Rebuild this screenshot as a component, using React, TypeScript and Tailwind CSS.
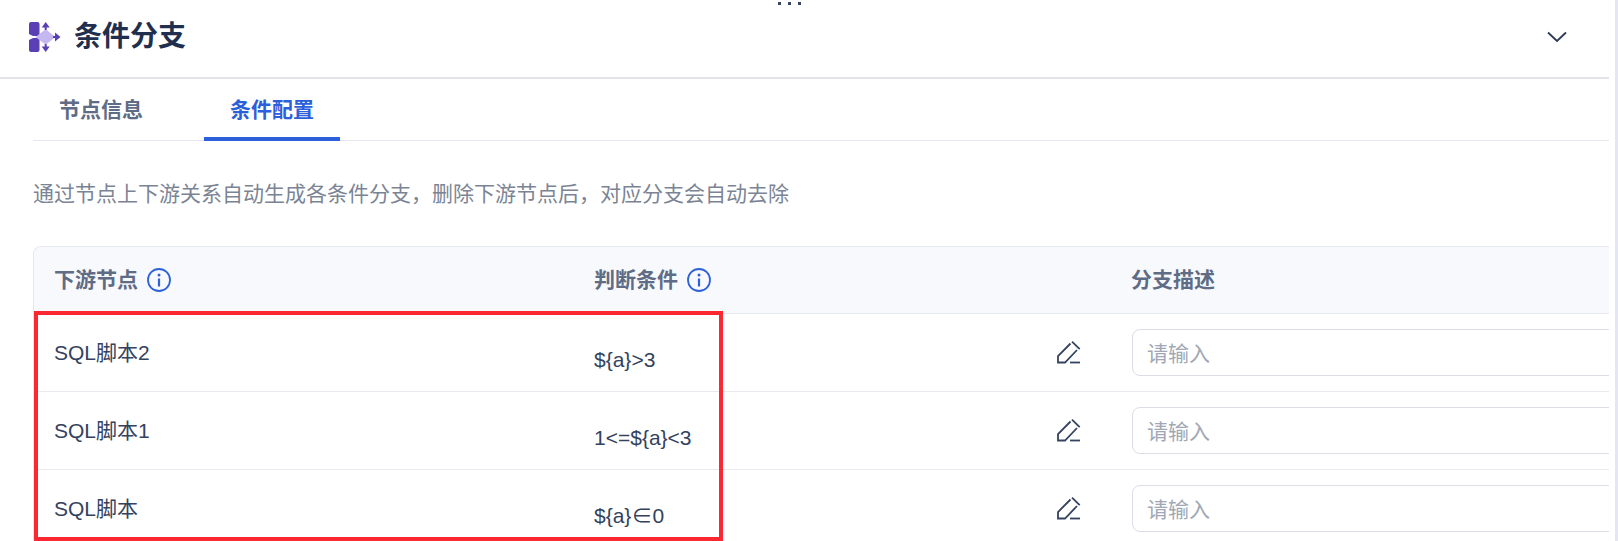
import React from 'react';

const rows = [
  { name: 'SQL脚本2', cond: '${a}>3' },
  { name: 'SQL脚本1', cond: '1<=${a}<3' },
  { name: 'SQL脚本', cond: '${a}∈0' },
];

function BranchLogo() {
  return (
    <svg width="33" height="32" viewBox="0 0 33 32" className="shrink-0">
      <rect x="1" y="1" width="10.500" height="30" rx="2" fill="#5a3fb5" />
      <path d="M0 12.500l5 2.500h4v2H5l-5 2.500z" fill="#fff" />
      <path d="M7.500 16L17.700 8.200 27.500 16l-9.800 7.800z" fill="#c5b8f0" />
      <path d="M17.700 5v4M17.700 23v4M25 16h3" stroke="#5a3fb5" strokeWidth="2" fill="none" />
      <path d="M13.700 6.500L17.700 1l4 5.500zM13.700 25.500l4 5.500 4-5.500zM27 11.500l5.500 4.500-5.500 4.500z" fill="#5a3fb5" />
    </svg>
  );
}

function InfoIcon() {
  return (
    <svg width="24" height="24" viewBox="0 0 24 24" fill="none" stroke="#2f62d9" className="shrink-0">
      <circle cx="12" cy="12" r="11" strokeWidth="1.800" />
      <circle cx="12" cy="7" r="1.500" fill="#2f62d9" stroke="none" />
      <path d="M12 10.500V18.500" strokeWidth="2.200" />
    </svg>
  );
}

function EditIcon() {
  return (
    <svg width="24" height="23" viewBox="0 0 24 23" fill="none" stroke="#34435f" strokeWidth="1.800" className="shrink-0">
      <path d="M20 9L8 21.500H1V15L13.500 2.500" />
      <path d="M15 0.700l7.700 7.500" />
      <path d="M13 21.500h10" />
    </svg>
  );
}

export default function App() {
  return (
    <div className="flex h-[541px] w-[1618px] overflow-hidden bg-white font-['Liberation_Sans','Noto_Sans_CJK_SC',sans-serif] text-[21px] text-[#33425e]">
      <div className="relative w-[1609px] shrink-0">
        {/* drag handle */}
        <div className="absolute left-[778px] top-[2px] flex gap-[7px]">
          <span className="h-[3px] w-[3px] bg-[#3a4660]" />
          <span className="h-[3px] w-[3px] bg-[#3a4660]" />
          <span className="h-[3px] w-[3px] bg-[#3a4660]" />
        </div>

        {/* Title */}
        <div className="flex h-[79px] items-center border-b-2 border-[#e2e3e8] pb-[3px] pl-[28px] pr-[42px]">
          <BranchLogo />
          <h1 className="ml-[13px] text-[28px] font-bold text-[#1f2f4d]">条件分支</h1>
          <svg width="20" height="12" viewBox="0 0 20 12" fill="none" stroke="#2b3a55" strokeWidth="1.800" className="ml-auto shrink-0">
            <path d="M1 1.500l9 8.500 9-8.500" />
          </svg>
        </div>

        <div className="pl-[33px]">
          {/* Tabs */}
          <div className="flex h-[62px] items-end gap-[35px] border-b border-[#e6e7ee]">
            <div className="-mb-px flex h-[62px] items-center border-b-[4px] border-transparent px-[26px] pt-[4px] font-bold text-[#5f6c85]">节点信息</div>
            <div className="-mb-px flex h-[62px] items-center border-b-[4px] border-[#2b60da] px-[26px] pt-[4px] font-bold text-[#2b60da]">条件配置</div>
          </div>

          <p className="mt-[39px] text-[#7b8494] leading-[28px]">通过节点上下游关系自动生成各条件分支，删除下游节点后，对应分支会自动去除</p>

          {/* Table */}
          <div className="mt-[38px] overflow-hidden rounded-tl-[8px] border-l border-t border-[#e6e8f0]">
            <div className="flex h-[67px] items-center border-b border-[#e6e8f0] bg-[#f8f9fd] font-bold text-[#5f6c85]">
              <div className="flex w-[560px] shrink-0 items-center gap-[9px] pl-[20px]">
                下游节点
                <InfoIcon />
              </div>
              <div className="flex w-[537px] shrink-0 items-center gap-[9px]">
                判断条件
                <InfoIcon />
              </div>
              <div>分支描述</div>
            </div>
            {rows.map((row) => (
              <div key={row.name} className="flex h-[78px] items-center border-b border-[#e9eaef]">
                <div className="w-[560px] shrink-0 pl-[20px]">{row.name}</div>
                <div className="mt-[14px] w-[463px] shrink-0">{row.cond}</div>
                <div className="flex w-[75px] shrink-0">
                  <EditIcon />
                </div>
                <div className="flex h-[47px] w-[540px] shrink-0 items-center rounded-[8px] border border-[#dcdde6] pl-[14px] pt-[2px] text-[#a1a8b5]">请输入</div>
              </div>
            ))}
          </div>
        </div>

        {/* red annotation frame */}
        <div className="absolute left-[34px] top-[311px] h-[230px] w-[689px] border-[4px] border-[#fb2731]" />
      </div>
      <div className="w-[6px] shrink-0" />
      <div className="w-[3px] shrink-0 bg-[#e4e6f3]" />
    </div>
  );
}
